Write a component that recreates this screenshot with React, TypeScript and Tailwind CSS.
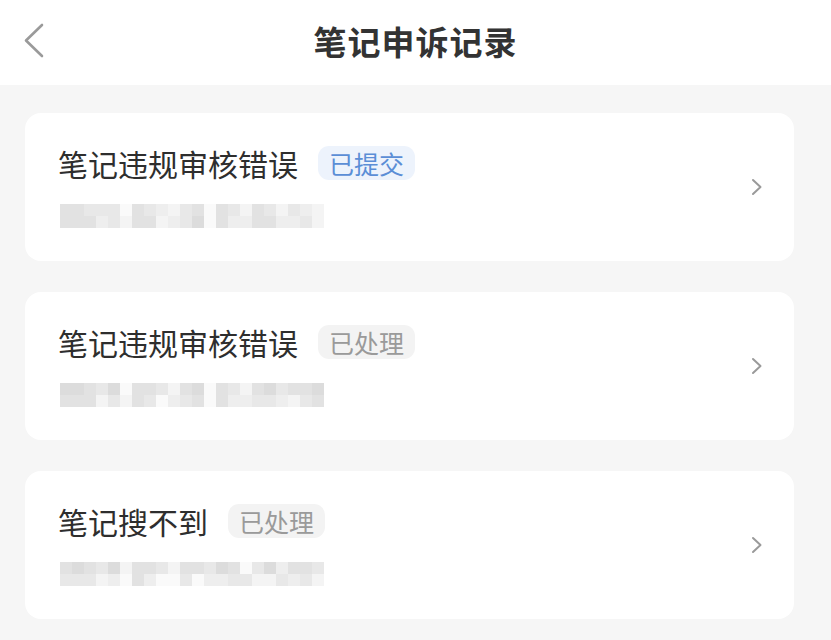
import React from 'react';

const shades = [
  'bg-[#dcdcdc]',
  'bg-[#e2e2e2]',
  'bg-[#e8e8e8]',
  'bg-[#eeeeee]',
  'bg-[#f4f4f4]',
  'bg-[#fafafa]',
];

type Record = {
  title: string;
  status: 'submitted' | 'done';
  mosaic: [string, string];
};

const records: Record[] = [
  {
    title: '笔记违规审核错误',
    status: 'submitted',
    mosaic: ['1122251234215124124234', '1113241143205133113324'],
  },
  {
    title: '笔记违规审核错误',
    status: 'done',
    mosaic: ['0012051124105124102110', '1114241253215133223421'],
  },
  {
    title: '笔记搜不到',
    status: 'done',
    mosaic: ['1012041124112015203112', '2224351355253322442324'],
  },
];

// 打码后的时间
function Mosaic({ rows }: { rows: [string, string] }) {
  return (
    <div className="flex flex-col">
      {rows.map((row, i) => (
        <div key={i} className="flex">
          {row.split('').map((c, j) => (
            <div key={j} className={`w-[12px] h-[12px] ${shades[Number(c)]}`} />
          ))}
        </div>
      ))}
    </div>
  );
}

function StatusTag({ status }: { status: Record['status'] }) {
  if (status === 'submitted') {
    return (
      <span className="h-[34px] px-[11px] flex items-center rounded-[11px] bg-[#edf3fc] text-[#5b8ed6] text-[25px] leading-none">
        已提交
      </span>
    );
  }
  return (
    <span className="h-[34px] px-[11px] flex items-center rounded-[11px] bg-[#f3f3f3] text-[#9a9a9a] text-[25px] leading-none">
      已处理
    </span>
  );
}

export default function App() {
  return (
    <div
      className="w-[831px] h-[640px] bg-[#f6f6f6] overflow-hidden"
      style={{ fontFamily: '"Noto Sans CJK SC", "Noto Sans", sans-serif' }}
    >
      {/* 顶部导航 */}
      <div className="relative h-[85px] bg-white flex items-center justify-center">
        <svg
          className="absolute left-[23px] top-[23px]"
          width="21"
          height="35"
          viewBox="0 0 21 35"
          fill="none"
        >
          <path d="M19 2 L3 17.5 L19 33" stroke="#9a9a9a" strokeWidth="2.6" strokeLinecap="round" strokeLinejoin="round" />
        </svg>
        <h1 className="text-[33px] font-bold text-[#333] tracking-[1px] -mt-[1px]">笔记申诉记录</h1>
      </div>

      {/* 列表 */}
      <div className="pt-[28px] pl-[25px] flex flex-col gap-[31px]">
        {records.map((r, i) => (
          <div
            key={i}
            className="w-[769px] h-[148px] bg-white rounded-[16px] flex items-center pl-[33px] pr-[30px]"
          >
            <div className="flex-1 flex flex-col">
              <div className="flex items-center gap-[20px] h-[34px]">
                <span className="text-[30px] text-[#2e2e2e] leading-none">{r.title}</span>
                <StatusTag status={r.status} />
              </div>
              <div className="mt-[24px] ml-[2px]">
                <Mosaic rows={r.mosaic} />
              </div>
            </div>
            <svg width="12" height="18" viewBox="0 0 12 18" fill="none" className="mr-[1px]">
              <path d="M2 2 L9.5 9 L2 16" stroke="#9a9a9a" strokeWidth="2" strokeLinecap="round" strokeLinejoin="round" />
            </svg>
          </div>
        ))}
      </div>
    </div>
  );
}
